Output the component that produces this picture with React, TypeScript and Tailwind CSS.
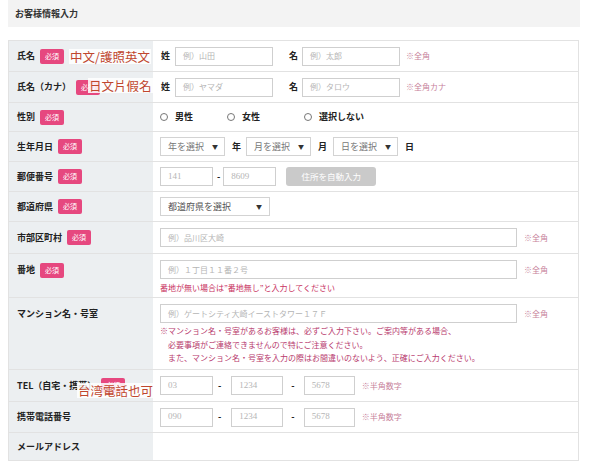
import React from 'react';

const JP = { fontFamily: '"Noto Sans CJK JP", "Noto Sans", sans-serif' };
const TC = { fontFamily: '"Noto Sans CJK TC", "Noto Sans", sans-serif' };

function Badge() {
  return (
    <span className="ml-[5px] inline-flex h-[15px] w-[24px] shrink-0 items-center justify-center rounded-[2px] bg-[#e6487f] text-[7px] leading-none text-white">
      必須
    </span>
  );
}

function Note({ children }: { children: React.ReactNode }) {
  return (
    <div
      className="absolute z-10 whitespace-nowrap bg-white/85 px-[1px] text-[12.5px] leading-[15px] text-[#c0462e]"
      style={TC}
    >
      {children}
    </div>
  );
}

function Box({ w, text, mono }: { w: string; text: string; mono?: boolean }) {
  return (
    <div
      className={`flex h-[19px] shrink-0 items-center whitespace-nowrap border border-[#cfcfcf] bg-white px-[7px] text-[8px] font-normal text-[#b5b5b5] ${w}`}
      style={mono ? { fontFamily: '"Liberation Serif", serif', fontSize: '9px' } : undefined}
    >
      {text}
    </div>
  );
}

function Select({ w, text }: { w: string; text: string }) {
  return (
    <div
      className={`flex h-[19px] shrink-0 items-center justify-between border border-[#d3d3d3] bg-white pl-[7px] pr-[6px] text-[9px] font-normal text-[#777] ${w}`}
    >
      <span>{text}</span>
      <span className="text-[6px] text-[#333]">▼</span>
    </div>
  );
}

function Hint({ children }: { children: React.ReactNode }) {
  return <span className="whitespace-nowrap text-[8px] font-normal text-[#c77f9b]">{children}</span>;
}

function Row({
  label,
  req,
  h,
  top,
  children,
  overlay,
}: {
  label: string;
  req?: boolean;
  h: string;
  top?: boolean;
  children?: React.ReactNode;
  overlay?: React.ReactNode;
}) {
  return (
    <div className={`flex border-b border-[#e2e2e2] ${h}`}>
      <div
        className={`relative flex w-[144px] shrink-0 bg-[#eceff1] pl-[8px] ${top ? 'items-start pt-[9px]' : 'items-center'}`}
      >
        <span className="whitespace-nowrap text-[9px] font-bold text-[#222]">{label}</span>
        {req && <Badge />}
        {overlay}
      </div>
      <div
        className={`flex flex-1 pl-[7px] text-[9px] font-bold text-[#222] ${top ? 'items-start' : 'items-center'}`}
      >
        {children}
      </div>
    </div>
  );
}

function Radio({ label, gap }: { label: string; gap: string }) {
  return (
    <div className={`flex items-center ${gap}`}>
      <span className="h-[8px] w-[8px] rounded-full border border-[#777] bg-white" />
      <span className="ml-[7px]">{label}</span>
    </div>
  );
}

export default function App() {
  return (
    <div className="h-[469px] w-[600px] bg-white" style={JP}>
      {/* header */}
      <div className="ml-[8px] flex h-[27px] w-[572px] items-center bg-[#f3f3f3] pl-[7px]">
        <span className="text-[9px] font-bold text-[#333]">お客様情報入力</span>
      </div>

      <div className="ml-[8px] mt-[13px] w-[571px] border-x border-t border-[#e2e2e2]">
        <Row
          label="氏名"
          req
          h="h-[31px]"
          overlay={<div className="absolute left-[60px] top-[8px]"><Note>中文/護照英文</Note></div>}
        >
          <span className="ml-[1px]">姓</span>
          <div className="ml-[5px]">
            <Box w="w-[98px]" text="例）山田" />
          </div>
          <span className="ml-[16px]">名</span>
          <div className="ml-[4px]">
            <Box w="w-[98px]" text="例）太郎" />
          </div>
          <span className="ml-[6px]">
            <Hint>※全角</Hint>
          </span>
        </Row>

        <Row
          label="氏名（カナ）"
          req
          h="h-[31px]"
          overlay={<div className="absolute left-[79px] top-[6px]"><Note>日文片假名</Note></div>}
        >
          <span className="ml-[1px]">姓</span>
          <div className="ml-[5px]">
            <Box w="w-[98px]" text="例）ヤマダ" />
          </div>
          <span className="ml-[16px]">名</span>
          <div className="ml-[4px]">
            <Box w="w-[98px]" text="例）タロウ" />
          </div>
          <span className="ml-[6px]">
            <Hint>※全角カナ</Hint>
          </span>
        </Row>

        <Row label="性別" req h="h-[29px]">
          <div className="flex items-center">
            <Radio label="男性" gap="" />
            <Radio label="女性" gap="ml-[34px]" />
            <Radio label="選択しない" gap="ml-[44px]" />
          </div>
        </Row>

        <Row label="生年月日" req h="h-[30px]">
          <Select w="w-[65px]" text="年を選択" />
          <span className="ml-[7px]">年</span>
          <Select w="w-[65px] ml-[5px]" text="月を選択" />
          <span className="ml-[7px]">月</span>
          <Select w="w-[65px] ml-[6px]" text="日を選択" />
          <span className="ml-[7px]">日</span>
        </Row>

        <Row label="郵便番号" req h="h-[30px]">
          <Box w="w-[53px]" text="141" mono />
          <span className="ml-[4px] mr-[3px]">-</span>
          <Box w="w-[53px]" text="8609" mono />
          <div className="ml-[10px] flex h-[19px] w-[90px] items-center justify-center rounded-[3px] bg-[#cacaca] text-[8.5px] font-normal text-white">
            住所を自動入力
          </div>
        </Row>

        <Row label="都道府県" req h="h-[30px]">
          <div className="flex h-[19px] w-[110px] items-center justify-between border border-[#d3d3d3] bg-white pl-[7px] pr-[7px] text-[9px] font-normal text-[#555]">
            <span>都道府県を選択</span>
            <span className="text-[6px] text-[#333]">▼</span>
          </div>
        </Row>

        <Row label="市部区町村" req h="h-[32px]">
          <Box w="w-[357px]" text="例）品川区大崎" />
          <span className="ml-[7px]">
            <Hint>※全角</Hint>
          </span>
        </Row>

        <Row label="番地" req h="h-[44px]" top>
          <div className="flex flex-col pt-[6px]">
            <div className="flex items-center">
              <Box w="w-[357px]" text="例）１丁目１１番２号" />
              <span className="ml-[7px]">
                <Hint>※全角</Hint>
              </span>
            </div>
            <div className="mt-[3px] whitespace-nowrap text-[8px] font-normal leading-[12px] text-[#c8325f]">
              番地が無い場合は”番地無し”と入力してください
            </div>
          </div>
        </Row>

        <Row label="マンション名・号室" h="h-[72px]" top>
          <div className="flex flex-col pt-[6px]">
            <div className="flex items-center">
              <Box w="w-[357px]" text="例）ゲートシティ大崎イーストタワー１７Ｆ" />
              <span className="ml-[7px]">
                <Hint>※全角</Hint>
              </span>
            </div>
            <div className="mt-[1px] whitespace-nowrap text-[8px] font-normal leading-[13.5px] text-[#b83a6e]">
              <div>※マンション名・号室があるお客様は、必ずご入力下さい。ご案内等がある場合、</div>
              <div className="pl-[8px]">必要事項がご連絡できませんので特にご注意ください。</div>
              <div className="pl-[8px]">また、マンション名・号室を入力の際はお間違いのないよう、正確にご入力ください。</div>
            </div>
          </div>
        </Row>

        <Row
          label="TEL（自宅・携帯）"
          req
          h="h-[32px]"
          overlay={<div className="absolute left-[68px] top-[13px]"><Note>台湾電話也可</Note></div>}
        >
          <Box w="w-[53px]" text="03" mono />
          <span className="ml-[5px] mr-[10px]">-</span>
          <Box w="w-[52px]" text="1234" mono />
          <span className="ml-[8px] mr-[9px]">-</span>
          <Box w="w-[51px]" text="5678" mono />
          <span className="ml-[7px]">
            <Hint>※半角数字</Hint>
          </span>
        </Row>

        <Row label="携帯電話番号" h="h-[31px]">
          <Box w="w-[53px]" text="090" mono />
          <span className="ml-[5px] mr-[10px]">-</span>
          <Box w="w-[52px]" text="1234" mono />
          <span className="ml-[8px] mr-[9px]">-</span>
          <Box w="w-[51px]" text="5678" mono />
          <span className="ml-[7px]">
            <Hint>※半角数字</Hint>
          </span>
        </Row>

        <Row label="メールアドレス" h="h-[28px]" />
      </div>
    </div>
  );
}
